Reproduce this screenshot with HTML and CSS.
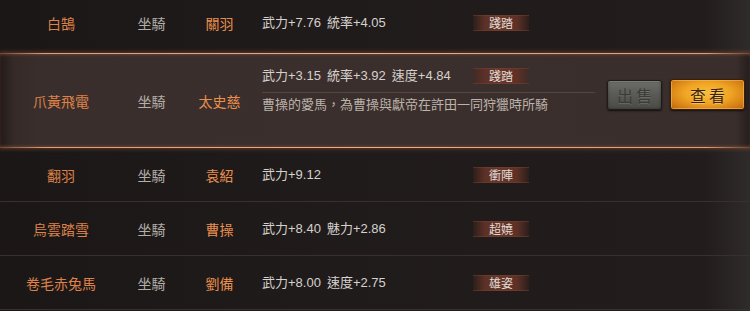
FILE: index.html
```html
<!DOCTYPE html>
<html lang="zh-Hant">
<head>
<meta charset="utf-8">
<title>坐騎</title>
<link rel="stylesheet" href="styles.css">
</head>
<body>
<div class="list">
  <div class="row first">
    <div class="c-name">白鵠</div>
    <div class="c-type">坐騎</div>
    <div class="c-gen">關羽</div>
    <div class="c-info">
      <div class="stats-line"><div class="stats"><span>武力+7.76</span><span>統率+4.05</span></div><span class="tag">踐踏</span></div>
    </div>
  </div>
  <div class="row selected">
    <div class="c-name">爪黃飛電</div>
    <div class="c-type">坐騎</div>
    <div class="c-gen">太史慈</div>
    <div class="c-info">
      <div class="stats-line"><div class="stats"><span>武力+3.15</span><span>統率+3.92</span><span>速度+4.84</span></div><span class="tag">踐踏</span></div>
      <div class="desc">曹操的愛馬，為曹操與獻帝在許田一同狩獵時所騎</div>
    </div>
    <div class="actions">
      <button class="btn sell">出售</button>
      <button class="btn view">查看</button>
    </div>
  </div>
  <div class="row">
    <div class="c-name">翻羽</div>
    <div class="c-type">坐騎</div>
    <div class="c-gen">袁紹</div>
    <div class="c-info">
      <div class="stats-line"><div class="stats"><span>武力+9.12</span></div><span class="tag">衝陣</span></div>
    </div>
  </div>
  <div class="row">
    <div class="c-name">烏雲踏雪</div>
    <div class="c-type">坐騎</div>
    <div class="c-gen">曹操</div>
    <div class="c-info">
      <div class="stats-line"><div class="stats"><span>武力+8.40</span><span>魅力+2.86</span></div><span class="tag">超嬈</span></div>
    </div>
  </div>
  <div class="row">
    <div class="c-name">卷毛赤兔馬</div>
    <div class="c-type">坐騎</div>
    <div class="c-gen">劉備</div>
    <div class="c-info">
      <div class="stats-line"><div class="stats"><span>武力+8.00</span><span>速度+2.75</span></div><span class="tag">雄姿</span></div>
    </div>
  </div>
</div>
</body>
</html>
```

FILE: styles.css
```css
html, body {
  margin: 0;
  padding: 0;
  background: #1d1919;
}

body {
  font-family: "Noto Sans CJK TC", "Noto Sans CJK SC", sans-serif;
}

.list {
  width: 750px;
  height: 311px;
  overflow: hidden;
  background: linear-gradient(to right, #1b1717 0%, #201b1b 40%, #221d1c 94%, #2e2b2a 100%);
}

.row {
  display: grid;
  grid-template-columns: 122px 59px 77px 337px 1fr;
  align-items: center;
  height: 54px;
  box-sizing: border-box;
  border-bottom: 1px solid #3a302b;
  line-height: 16px;
}

.row.first {
  height: 53px;
  padding-bottom: 7px;
  border-bottom: none;
}

.row.selected {
  height: 95px;
  border-top: 1px solid #dca27c;
  border-bottom: 1px solid #dca27c;
  border-image: linear-gradient(to right, #6a4432 0%, #d9a07a 6%, #e6b08a 50%, #d9a07a 94%, #6a4432 100%) 1;
  border-left: 0;
  border-right: 0;
  background: linear-gradient(to right, #221a19 0px, #352a28 14px, #3a2e2c 40px, #3b2f2d 60%, #3a2e2c calc(100% - 14px), #241d1c 100%);
  box-shadow: 0 0 4px 1px rgba(170, 95, 60, 0.45), inset 0 2px 3px -1px rgba(160, 90, 60, 0.45), inset 0 -2px 3px -1px rgba(160, 90, 60, 0.45);
}

.c-name,
.c-type,
.c-gen {
  text-align: center;
  font-size: 14px;
  white-space: nowrap;
}

.c-name {
  color: #de8249;
}

.c-type {
  color: #b3ada8;
}

.c-gen {
  color: #e98f4d;
}

.c-info {
  padding-left: 4px;
}

.stats-line {
  display: flex;
  align-items: center;
  height: 16px;
}

.stats {
  width: 211px;
  display: flex;
  gap: 6px;
  font-family: "Liberation Sans", "Noto Sans CJK TC", sans-serif;
  font-size: 13px;
  color: #d6d1cc;
  white-space: nowrap;
}

.tag {
  width: 56px;
  height: 14px;
  line-height: 14px;
  text-align: center;
  font-size: 12px;
  color: #e2dad4;
  border-top: 1px solid rgba(120, 70, 50, 0.45);
  border-bottom: 1px solid rgba(120, 70, 50, 0.45);
  background: linear-gradient(to right, rgba(70, 34, 26, 0.3) 0%, #5e3126 22%, #653529 50%, #5e3126 78%, rgba(70, 34, 26, 0.3) 100%);
}

.selected .c-info {
  align-self: start;
  padding-top: 14px;
}

.selected .stats-line {
  padding-bottom: 8px;
  border-bottom: 1px solid #54463f;
}

.desc {
  margin-top: 3px;
  font-size: 13px;
  color: #bcb3ab;
  white-space: nowrap;
}

.actions {
  align-self: start;
  display: flex;
  gap: 8px;
  padding-top: 25px;
  padding-left: 12px;
}

.btn {
  box-sizing: border-box;
  height: 31px;
  padding: 0;
  border-radius: 3px;
  font-family: "Noto Sans CJK TC", sans-serif;
  font-size: 16px;
  letter-spacing: 3px;
  text-indent: 3px;
  line-height: 28px;
}

.sell {
  width: 55px;
  height: 30px;
  margin-top: 1px;
  color: #3b3b37;
  border: 1px solid #1c1c1a;
  background: linear-gradient(#6d6d68 0%, #5a5a55 50%, #4b4b46 100%);
  box-shadow: inset 0 1px 0 rgba(255, 255, 255, 0.18), inset 0 0 3px rgba(0, 0, 0, 0.4), 0 1px 2px rgba(0, 0, 0, 0.7);
  text-shadow: 0 1px 0 rgba(255, 255, 255, 0.12);
}

.view {
  width: 75px;
  color: #3a2410;
  border: 1px solid #3a1e08;
  background: radial-gradient(ellipse at 50% 45%, #f9bc3c 0%, #f0a424 45%, #d27c14 80%, #b8620e 100%);
  box-shadow: inset 0 0 0 1px rgba(255, 206, 110, 0.45), 0 1px 2px rgba(0, 0, 0, 0.7);
  text-shadow: 0 1px 0 rgba(255, 220, 150, 0.5);
}
```
